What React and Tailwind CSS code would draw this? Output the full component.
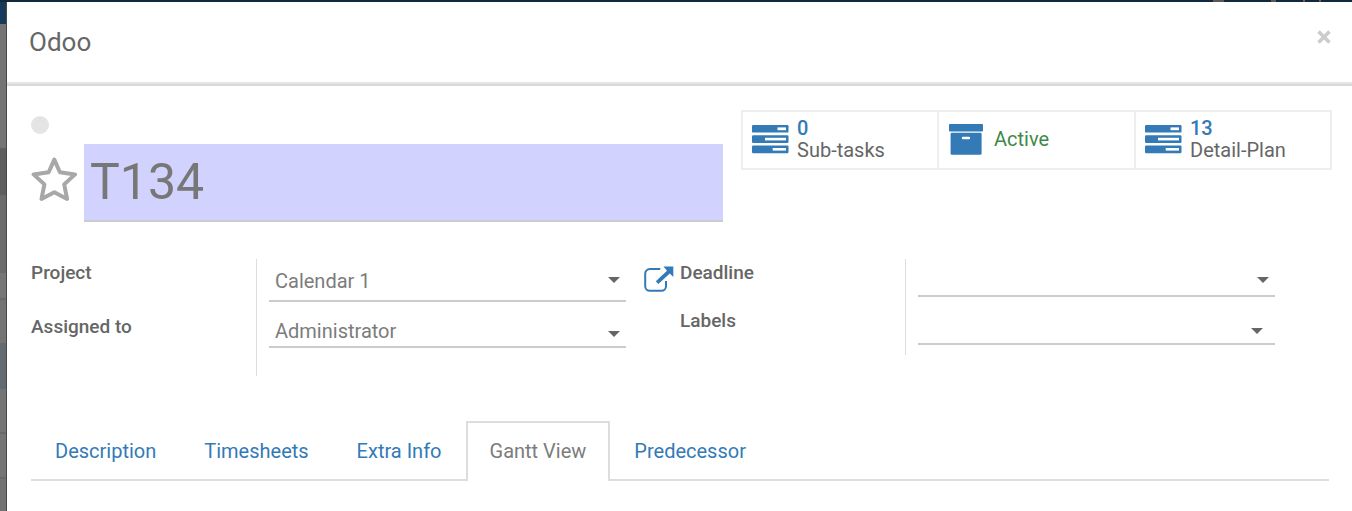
import React from "react";

function TasksIcon() {
  return (
    <svg width="37" height="29" viewBox="0 0 37 29" aria-hidden="true" className="shrink-0">
      <g fill="#337ab7">
        <rect x="0" y="0" width="36.5" height="7.6" rx="1.2" />
        <rect x="0" y="10.2" width="36.5" height="7.8" rx="1.2" />
        <rect x="0" y="20.4" width="36.5" height="7.8" rx="1.2" />
      </g>
      <g fill="#fff">
        <rect x="25.5" y="2.4" width="8.5" height="2.8" />
        <rect x="13" y="12.8" width="21" height="2.6" />
        <rect x="20.7" y="23" width="13.3" height="2.6" />
      </g>
    </svg>
  );
}

function ArchiveIcon() {
  return (
    <svg width="34" height="31" viewBox="0 0 34 31" aria-hidden="true" className="shrink-0">
      <rect x="0" y="0" width="34" height="7.6" rx="0.8" fill="#337ab7" />
      <rect x="1.6" y="8.8" width="31" height="22" rx="1.2" fill="#337ab7" />
      <rect x="12.8" y="12.8" width="8.4" height="2.4" rx="1.2" fill="#fff" />
    </svg>
  );
}

function ExternalLinkIcon() {
  return (
    <svg width="30" height="27" viewBox="0 0 30 27" aria-hidden="true">
      <path
        d="M16.3 3H5.800A4.600 4.600 0 0 0 1.200 7.600V20.200A4.600 4.600 0 0 0 5.800 24.800H17.400A4.600 4.600 0 0 0 22 20.200V15"
        fill="none"
        stroke="#337ab7"
        strokeWidth="2"
      />
      <path d="M19.500 0.500H29.300V11L25.800 7.500L14.300 18L11.800 15.300L23 4.700Z" fill="#337ab7" />
    </svg>
  );
}

function StarIcon() {
  return (
    <svg width="47" height="46" viewBox="0 0 47 46" aria-hidden="true">
      <path
        d="M23.300 3.600L28.900 16.200L44 18.400L33.200 28.400L36.100 42.900L23.300 36.200L10.500 42.900L13.400 28.400L2.600 18.400L17.700 16.200Z"
        fill="none"
        stroke="#a8a8a8"
        strokeWidth="4"
        strokeLinejoin="round"
      />
    </svg>
  );
}

function Caret({ className }) {
  return (
    <svg
      width="12"
      height="6"
      viewBox="0 0 12 6"
      aria-hidden="true"
      className={`pointer-events-none absolute ${className}`}
    >
      <path d="M0 0H12L6 6Z" fill="#666" />
    </svg>
  );
}

function Stat({ icon, count, label }) {
  return (
    <button
      type="button"
      className="flex flex-1 items-center gap-2 border-r-2 border-[#eee] pb-0.5 pl-[9px] text-left leading-[22px] last:border-r-0"
    >
      {icon}
      <span>
        <span className="block font-medium text-[#337ab7]">{count}</span>
        <span className="block">{label}</span>
      </span>
    </button>
  );
}

const control =
  "w-full appearance-none rounded-none border-b-2 border-[#ccc] bg-transparent px-1.5 text-[#7c7c7c] outline-none";

const backdrop = [
  "h-[22px] bg-[#17395a]",
  "h-[124px] bg-[#747474]",
  "h-0.5 bg-[#606060]",
  "h-[45px] bg-[#5e5e60]",
  "h-[78px] bg-[#6b6b6b]",
  "h-[25px] bg-[#767676]",
  "h-0.5 bg-[#686868]",
  "h-[43px] bg-[#747474]",
  "h-[46px] bg-[#626b70]",
  "h-[43px] bg-[#747474]",
  "h-0.5 bg-[#686868]",
  "h-[43px] bg-[#747474]",
  "h-0.5 bg-[#686868]",
  "flex-1 bg-[#727272]",
];

const tabs = ["Description", "Timesheets", "Extra Info", "Gantt View", "Predecessor"];

export default function App() {
  const [active, setActive] = React.useState("Gantt View");

  return (
    <div className="flex min-h-screen flex-col bg-white font-['Roboto',sans-serif] text-[20px] leading-7 text-[#666]">
      <div className="flex h-0.5 justify-end bg-[#11293f] pr-[31px]">
        <span className="mr-[47px] w-[11px] bg-[#5c5657]" />
        <span className="mr-[27px] w-[5px] bg-[#5c5657]" />
        <span className="mr-[14px] w-0.5 bg-[#765b55]" />
        <span className="w-0.5 bg-[#765b55]" />
      </div>
      <div className="flex flex-1">
        <div className="flex w-[7px] shrink-0 flex-col border-r border-[#484848]">
          {backdrop.map((band, i) => (
            <div key={i} className={band} />
          ))}
        </div>

        <main className="min-w-0 flex-1">
          <header className="flex h-20 items-center justify-between pr-[19px] pl-[22px]">
            <h1 className="text-[26px]">Odoo</h1>
            <button type="button" aria-label="Close" className="mb-2.5 p-0.5">
              <svg width="14" height="14" viewBox="0 0 14 14" aria-hidden="true">
                <path d="M1.500 1.500L12.500 12.500M12.500 1.500L1.500 12.500" stroke="#ccc" strokeWidth="3.600" />
              </svg>
            </button>
          </header>
          <div className="h-1 border-t-2 border-[#e5e5e5] bg-[#d9d9d9]" />

          <div className="pt-6 pr-[23px] pl-6">
            <section className="-mr-[3px] flex items-start justify-between">
              <div className="w-[692px] pt-1.5">
                <button
                  type="button"
                  aria-label="Status"
                  className="block size-[18px] rounded-full bg-[#e4e4e4]"
                />
                <div className="flex items-center gap-1.5 pt-2.5">
                  <button type="button" aria-label="Favourite" className="shrink-0 pb-2">
                    <StarIcon />
                  </button>
                  <input
                    aria-label="Task title"
                    defaultValue="T134"
                    className="h-[78px] min-w-0 flex-1 border-b-2 border-[#ccc] bg-[#d2d2ff] px-1.5 text-[50px] text-[#777] outline-none"
                  />
                </div>
              </div>
              <div className="flex h-[60px] w-[591px] border-2 border-[#eee]">
                <Stat icon={<TasksIcon />} count="0" label="Sub-tasks" />
                <button
                  type="button"
                  className="flex flex-1 items-center gap-[11px] border-r-2 border-[#eee] pb-0.5 pl-2.5 text-[#3f8a46]"
                >
                  <ArchiveIcon />
                  Active
                </button>
                <Stat icon={<TasksIcon />} count="13" label="Detail-Plan" />
              </div>
            </section>

            <section className="grid grid-cols-2 items-start pt-[37px]">
              <div className="flex">
                <div className="flex w-[225px] shrink-0 flex-col gap-[26px] text-[19px] leading-7 font-medium">
                  <label htmlFor="project">Project</label>
                  <label htmlFor="assigned">Assigned to</label>
                </div>
                <div className="flex flex-1 flex-col gap-[11px] border-l border-[#ddd] pb-7 pl-3">
                  <div className="flex items-center">
                    <div className="relative flex flex-1">
                      <select id="project" className={`${control} h-[43px] pt-0.5`}>
                        <option>Calendar 1</option>
                      </select>
                      <Caret className="right-1.5 bottom-[19px]" />
                    </div>
                    <div className="flex w-[54px] justify-end pr-1.5 pb-0.5">
                      <button type="button" aria-label="Open project">
                        <ExternalLinkIcon />
                      </button>
                    </div>
                  </div>
                  <div className="relative mr-[54px] flex">
                    <select id="assigned" className={`${control} h-[35px] pt-0.5`}>
                      <option>Administrator</option>
                    </select>
                    <Caret className="right-1.5 bottom-[11px]" />
                  </div>
                </div>
              </div>

              <div className="flex">
                <div className="flex w-[225px] shrink-0 flex-col gap-5 text-[19px] leading-7 font-medium">
                  <label htmlFor="deadline">Deadline</label>
                  <label htmlFor="labels">Labels</label>
                </div>
                <div className="flex flex-1 flex-col gap-2.5 border-l border-[#ddd] pr-[54px] pb-2.5 pl-3">
                  <div className="relative flex">
                    <input id="deadline" className={`${control} h-[38px]`} />
                    <Caret className="right-1.5 bottom-3.5" />
                  </div>
                  <div className="relative flex">
                    <input id="labels" className={`${control} h-[38px]`} />
                    <Caret className="right-3 bottom-[11px]" />
                  </div>
                </div>
              </div>
            </section>

            <nav role="tablist" className="mt-[45px] flex border-b-2 border-[#ddd]">
              {tabs.map((tab) => (
                <button
                  key={tab}
                  type="button"
                  role="tab"
                  aria-selected={tab === active}
                  onClick={() => setActive(tab)}
                  className={
                    tab === active
                      ? "-mb-0.5 h-[60px] border-2 border-b-0 border-[#ddd] bg-white px-[22px] pb-0.5 text-[#7c7c7c]"
                      : "h-[58px] border-t-2 border-transparent px-6 text-[#337ab7]"
                  }
                >
                  {tab}
                </button>
              ))}
            </nav>
          </div>
        </main>
      </div>
    </div>
  );
}
